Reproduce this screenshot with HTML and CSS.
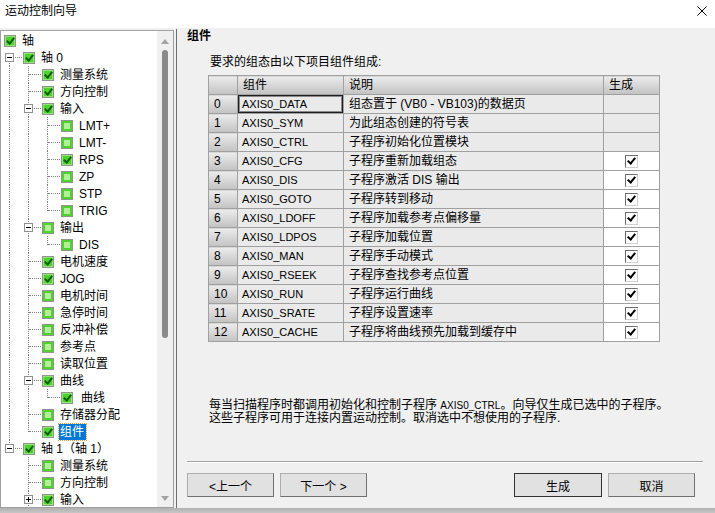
FILE: index.html
```html
<!DOCTYPE html>
<html lang="zh-CN">
<head>
    <meta charset="UTF-8">
    <title>运动控制向导</title>
    <link rel="stylesheet" href="styles.css">
</head>
<body>
    <div class="titlebar">
        <span class="title">运动控制向导</span>
        <svg class="close" width="10" height="10" viewBox="0 0 10 10">
            <path d="M0.5 0.5 L9.5 9.5 M9.5 0.5 L0.5 9.5" stroke="#000" stroke-width="1" fill="none"/>
        </svg>
    </div>

    <div class="main">
        <!-- 左侧树 -->
        <div class="tree-box">
            <div class="tree">
                <div class="node"><span class="cb on"></span><span class="label">轴</span></div>
                <div class="node"><span class="g g-start"><span class="exp minus"></span></span><span class="cb on"></span><span class="label">轴 0</span></div>
                <div class="node"><span class="g g-line"></span><span class="g g-tee"></span><span class="cb on"></span><span class="label">测量系统</span></div>
                <div class="node"><span class="g g-line"></span><span class="g g-tee"></span><span class="cb on"></span><span class="label">方向控制</span></div>
                <div class="node"><span class="g g-line"></span><span class="g g-tee"><span class="exp minus"></span></span><span class="cb on"></span><span class="label">输入</span></div>
                <div class="node"><span class="g g-line"></span><span class="g g-line"></span><span class="g g-tee"></span><span class="cb"></span><span class="label">LMT+</span></div>
                <div class="node"><span class="g g-line"></span><span class="g g-line"></span><span class="g g-tee"></span><span class="cb"></span><span class="label">LMT-</span></div>
                <div class="node"><span class="g g-line"></span><span class="g g-line"></span><span class="g g-tee"></span><span class="cb on"></span><span class="label">RPS</span></div>
                <div class="node"><span class="g g-line"></span><span class="g g-line"></span><span class="g g-tee"></span><span class="cb"></span><span class="label">ZP</span></div>
                <div class="node"><span class="g g-line"></span><span class="g g-line"></span><span class="g g-tee"></span><span class="cb"></span><span class="label">STP</span></div>
                <div class="node"><span class="g g-line"></span><span class="g g-line"></span><span class="g g-end"></span><span class="cb"></span><span class="label">TRIG</span></div>
                <div class="node"><span class="g g-line"></span><span class="g g-tee"><span class="exp minus"></span></span><span class="cb"></span><span class="label">输出</span></div>
                <div class="node"><span class="g g-line"></span><span class="g g-line"></span><span class="g g-end"></span><span class="cb"></span><span class="label">DIS</span></div>
                <div class="node"><span class="g g-line"></span><span class="g g-tee"></span><span class="cb on"></span><span class="label">电机速度</span></div>
                <div class="node"><span class="g g-line"></span><span class="g g-tee"></span><span class="cb on"></span><span class="label">JOG</span></div>
                <div class="node"><span class="g g-line"></span><span class="g g-tee"></span><span class="cb"></span><span class="label">电机时间</span></div>
                <div class="node"><span class="g g-line"></span><span class="g g-tee"></span><span class="cb"></span><span class="label">急停时间</span></div>
                <div class="node"><span class="g g-line"></span><span class="g g-tee"></span><span class="cb"></span><span class="label">反冲补偿</span></div>
                <div class="node"><span class="g g-line"></span><span class="g g-tee"></span><span class="cb"></span><span class="label">参考点</span></div>
                <div class="node"><span class="g g-line"></span><span class="g g-tee"></span><span class="cb"></span><span class="label">读取位置</span></div>
                <div class="node"><span class="g g-line"></span><span class="g g-tee"><span class="exp minus"></span></span><span class="cb on"></span><span class="label">曲线</span></div>
                <div class="node"><span class="g g-line"></span><span class="g g-line"></span><span class="g g-end"></span><span class="cb on"></span><span class="label sub">曲线</span></div>
                <div class="node"><span class="g g-line"></span><span class="g g-tee"></span><span class="cb"></span><span class="label">存储器分配</span></div>
                <div class="node"><span class="g g-line"></span><span class="g g-end"></span><span class="cb on"></span><span class="label selected">组件</span></div>
                <div class="node"><span class="g g-end"><span class="exp minus"></span></span><span class="cb on"></span><span class="label">轴 1（轴 1）</span></div>
                <div class="node"><span class="g"></span><span class="g g-tee"></span><span class="cb"></span><span class="label">测量系统</span></div>
                <div class="node"><span class="g"></span><span class="g g-tee"></span><span class="cb"></span><span class="label">方向控制</span></div>
                <div class="node"><span class="g"></span><span class="g g-tee"><span class="exp plus"></span></span><span class="cb on"></span><span class="label">输入</span></div>
            </div>
            <div class="vscroll">
                <span class="arrow-up"></span>
                <span class="thumb"></span>
                <span class="arrow-down"></span>
            </div>
        </div>
        <div class="splitter"></div>

        <!-- 右侧页面 -->
        <div class="page">
            <h2 class="heading">组件</h2>
            <div class="intro">要求的组态由以下项目组件组成:</div>

            <table class="grid">
                <colgroup>
                    <col class="c-num">
                    <col class="c-name">
                    <col class="c-desc">
                    <col class="c-gen">
                </colgroup>
                <tr>
                    <th></th>
                    <th>组件</th>
                    <th>说明</th>
                    <th>生成</th>
                </tr>
                <tr><td class="num">0</td><td class="name focus">AXIS0_DATA</td><td>组态置于 (VB0 - VB103)的数据页</td><td></td></tr>
                <tr><td class="num">1</td><td class="name">AXIS0_SYM</td><td>为此组态创建的符号表</td><td></td></tr>
                <tr><td class="num">2</td><td class="name">AXIS0_CTRL</td><td>子程序初始化位置模块</td><td></td></tr>
                <tr><td class="num">3</td><td class="name">AXIS0_CFG</td><td>子程序重新加载组态</td><td class="gen"><span class="chk"></span></td></tr>
                <tr><td class="num">4</td><td class="name">AXIS0_DIS</td><td>子程序激活 DIS 输出</td><td class="gen"><span class="chk"></span></td></tr>
                <tr><td class="num">5</td><td class="name">AXIS0_GOTO</td><td>子程序转到移动</td><td class="gen"><span class="chk"></span></td></tr>
                <tr><td class="num">6</td><td class="name">AXIS0_LDOFF</td><td>子程序加载参考点偏移量</td><td class="gen"><span class="chk"></span></td></tr>
                <tr><td class="num">7</td><td class="name">AXIS0_LDPOS</td><td>子程序加载位置</td><td class="gen"><span class="chk"></span></td></tr>
                <tr><td class="num">8</td><td class="name">AXIS0_MAN</td><td>子程序手动模式</td><td class="gen"><span class="chk"></span></td></tr>
                <tr><td class="num">9</td><td class="name">AXIS0_RSEEK</td><td>子程序查找参考点位置</td><td class="gen"><span class="chk"></span></td></tr>
                <tr><td class="num">10</td><td class="name">AXIS0_RUN</td><td>子程序运行曲线</td><td class="gen"><span class="chk"></span></td></tr>
                <tr><td class="num">11</td><td class="name">AXIS0_SRATE</td><td>子程序设置速率</td><td class="gen"><span class="chk"></span></td></tr>
                <tr><td class="num">12</td><td class="name">AXIS0_CACHE</td><td>子程序将曲线预先加载到缓存中</td><td class="gen"><span class="chk"></span></td></tr>
            </table>

            <div class="note">
                每当扫描程序时都调用初始化和控制子程序 <span class="mono">AXIS0_CTRL</span>。向导仅生成已选中的子程序。<br>
                这些子程序可用于连接内置运动控制。取消选中不想使用的子程序.
            </div>

            <div class="spacer"></div>
            <div class="sep"></div>
            <div class="buttons">
                <button class="btn">&lt;上一个</button>
                <button class="btn">下一个 &gt;</button>
                <button class="btn btn-default push">生成</button>
                <button class="btn">取消</button>
            </div>
        </div>
    </div>
    <div class="band"></div>
</body>
</html>
```

FILE: styles.css
```css
body {
    margin: 0;
    width: 715px;
    height: 513px;
    overflow: hidden;
    font-family: "Liberation Sans", "Noto Sans CJK SC", sans-serif;
    font-size: 12px;
    color: #000;
    background-color: #f0f0f0;
}
.titlebar {
    height: 28px;
    box-sizing: border-box;
    background-color: #fff;
    display: flex;
    justify-content: space-between;
    align-items: flex-start;
    padding: 3px 8px 0 5px;
}
.title {
    line-height: 16px;
}
.close {
    margin-top: 3px;
}
.main {
    display: flex;
    height: 480px;
}
.tree-box {
    width: 174px;
    height: 478px;
    box-sizing: border-box;
    margin-top: 2px;
    margin-right: 2px;
    border: 1px solid #a0a0a0;
    background-color: #fff;
    display: flex;
}
.tree {
    flex: 1;
    padding: 1px 0 0 2px;
    overflow: hidden;
}
.node {
    display: flex;
    align-items: center;
    height: 17px;
    white-space: nowrap;
}
.g {
    width: 19px;
    height: 17px;
    flex: none;
    position: relative;
}
.g-line::before,
.g-tee::before,
.g-end::before,
.g-start::before {
    content: "";
    position: absolute;
    left: 6px;
    top: 0;
    bottom: 0;
    border-left: 1px dotted #808080;
}
.g-end::before {
    bottom: 8px;
}
.g-start::before {
    top: 8px;
}
.g-tee::after,
.g-end::after,
.g-start::after {
    content: "";
    position: absolute;
    left: 7px;
    right: 0;
    top: 8px;
    border-top: 1px dotted #808080;
}
.exp {
    position: absolute;
    left: 2px;
    top: 4px;
    width: 9px;
    height: 9px;
    box-sizing: border-box;
    border: 1px solid #919191;
    background-color: #fff;
    z-index: 1;
}
.exp::before {
    content: "";
    position: absolute;
    left: 1px;
    top: 3px;
    width: 5px;
    height: 1px;
    background-color: #000;
}
.plus::after {
    content: "";
    position: absolute;
    left: 3px;
    top: 1px;
    width: 1px;
    height: 5px;
    background-color: #000;
}
.cb {
    flex: none;
    width: 12px;
    height: 12px;
    box-sizing: border-box;
    margin-left: 1px;
    border: 1px solid #939393;
    background-color: #b4ee9a;
    box-shadow: inset 0 0 0 2px #4fd22e;
    position: relative;
}
.cb.on {
    background-color: #4fd22e;
    box-shadow: inset 0 0 0 1px #8fe672;
}
.cb.on::after {
    content: "";
    position: absolute;
    left: 3px;
    top: 0;
    width: 3px;
    height: 6px;
    border: solid #0f5f0f;
    border-width: 0 2px 2px 0;
    transform: rotate(40deg);
}
.label {
    margin-left: 5px;
    padding: 0 2px 0 1px;
    line-height: 16px;
    height: 16px;
}
.label.sub {
    padding-left: 3px;
}
.label.selected {
    background-color: #0078d7;
    color: #fff;
    outline: 1px dotted #e0a040;
}
.vscroll {
    width: 16px;
    flex: none;
    background-color: #f0f0f0;
    display: flex;
    flex-direction: column;
    align-items: center;
    padding: 8px 0 6px;
    box-sizing: border-box;
}
.arrow-up {
    width: 0;
    height: 0;
    border-left: 4px solid transparent;
    border-right: 4px solid transparent;
    border-bottom: 5px solid #a3a3a3;
}
.arrow-down {
    margin-top: auto;
    width: 0;
    height: 0;
    border-left: 4px solid transparent;
    border-right: 4px solid transparent;
    border-top: 5px solid #a3a3a3;
}
.thumb {
    margin-top: 6px;
    width: 6px;
    height: 288px;
    border-radius: 3px;
    background-color: #8a8a8a;
}
.splitter {
    width: 1px;
    margin-top: 1px;
    background-color: #6d6d6d;
}
.page {
    flex: 1;
    display: flex;
    flex-direction: column;
    padding: 0 12px 11px 10px;
}
.heading {
    margin: 0;
    font-size: 12px;
    font-weight: bold;
    line-height: 16px;
}
.intro {
    margin: 10px 0 0 23px;
    line-height: 16px;
}
.grid {
    margin: 5px 0 0 21px;
    border-collapse: collapse;
    table-layout: fixed;
    width: 451px;
}
.c-num { width: 29px; }
.c-name { width: 106px; }
.c-desc { width: 260px; }
.c-gen { width: 56px; }
.grid th,
.grid td {
    height: 18px;
    padding: 0 0 0 5px;
    border: 1px solid #a0a0a0;
    text-align: left;
    font-weight: normal;
    line-height: 16px;
    white-space: nowrap;
    overflow: hidden;
    background-color: #eaeaea;
}
.grid th,
.grid td.num {
    background: linear-gradient(#ececec, #c2c2c2);
}
.grid td.name {
    font-size: 11px;
    padding-left: 4px;
}
.grid td.focus {
    box-shadow: inset 0 0 0 1px #1e1e1e, inset 0 0 0 2px #8a8a8a;
}
.grid td.gen {
    background-color: #fff;
    padding: 0;
    text-align: center;
}
.chk {
    display: inline-block;
    vertical-align: middle;
    width: 13px;
    height: 13px;
    box-sizing: border-box;
    border: 1px solid;
    border-color: #6d6d6d #d0d0d0 #d0d0d0 #6d6d6d;
    background-color: #fff;
    position: relative;
}
.chk::after {
    content: "";
    position: absolute;
    left: 3px;
    top: 0;
    width: 3px;
    height: 6px;
    border: solid #000;
    border-width: 0 2px 2px 0;
    transform: rotate(40deg);
}
.note {
    margin: 57px 0 0 22px;
    line-height: 12px;
}
.mono {
    font-size: 10px;
}
.spacer {
    flex: 1;
}
.sep {
    border-top: 1px solid #a0a0a0;
    border-bottom: 1px solid #fff;
    margin-bottom: 10px;
}
.buttons {
    display: flex;
    gap: 6px;
    padding-right: 8px;
}
.btn {
    width: 87px;
    height: 24px;
    padding: 0;
    font-family: inherit;
    font-size: 12px;
    color: #000;
    background-color: #e1e1e1;
    border: 1px solid;
    border-color: #adadad #707070 #707070 #adadad;
}
.btn-default {
    width: 88px;
    border-color: #333;
}
.push {
    margin-left: auto;
}
.band {
    height: 5px;
    background: linear-gradient(#b0b0b0, #c6c6c6);
}
```
